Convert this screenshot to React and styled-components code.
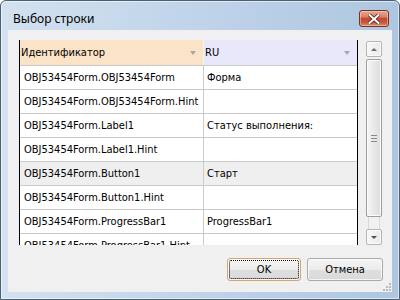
import React from "react";
import styled, { createGlobalStyle } from "styled-components";

const Global = createGlobalStyle`
  html, body { margin: 0; padding: 0; background: #ffffff; }
  #root { width: 400px; height: 300px; }
`;

const Window = styled.div`
  box-sizing: border-box;
  width: 400px;
  height: 300px;
  border: 1px solid #4d5f73;
  border-radius: 6px 6px 0 0;
  background: linear-gradient(to right, #d3e1f0 0%, #c1d5ea 45%, #aec6e0 100%);
  display: flex;
  flex-direction: column;
  overflow: hidden;
  box-shadow: inset 0 0 0 1px rgba(255, 255, 255, 0.55);
`;

const TitleBar = styled.div`
  height: 29px;
  box-sizing: border-box;
  padding: 9px 10px 0 12px;
  display: flex;
  align-items: flex-start;
  justify-content: space-between;
`;

const Title = styled.div`
  font-family: "Noto Sans", "Open Sans", sans-serif;
  font-size: 12px;
  line-height: 17px;
  color: #000;
`;

const CloseButton = styled.div`
  width: 30px;
  height: 17px;
  box-sizing: border-box;
  border: 1px solid #7a2f22;
  border-radius: 3px;
  background: linear-gradient(
    to bottom,
    #e6a895 0%,
    #d98068 40%,
    #c4482f 50%,
    #c7553a 75%,
    #dc8c6e 100%
  );
  display: flex;
  align-items: center;
  justify-content: center;
  box-shadow: inset 0 0 0 1px rgba(255, 220, 200, 0.5);
`;

const Client = styled.div`
  position: relative;
  margin: 0 7px 7px 7px;
  height: 262px;
  box-sizing: border-box;
  background: #f0f0f0;
  padding: 10px 9px 0 11px;
  display: flex;
  flex-direction: column;
`;

const Body = styled.div`
  display: flex;
  gap: 8px;
  height: 205px;
`;

const Grid = styled.div`
  width: 339px;
  height: 205px;
  box-sizing: border-box;
  border-left: 1px solid #000;
  border-right: 1px solid #000;
  background: #ffffff;
  overflow: hidden;
  font-family: "DejaVu Sans Condensed", "DejaVu Sans", sans-serif;
  font-stretch: condensed;
  font-size: 11px;
  color: #000;
`;

const HeaderRow = styled.div`
  display: flex;
  height: 25px;
  border-bottom: 1px solid #c9c9c9;
`;

const HeaderCell = styled.div`
  box-sizing: border-box;
  width: ${(p) => p.$w}px;
  background: ${(p) => p.$bg};
  border-left: ${(p) => (p.$first ? "none" : "1px solid #f6f2f0")};
  padding: 0 7px 0 1px;
  display: flex;
  align-items: center;
  justify-content: space-between;
`;

const SortArrow = styled.span`
  width: 0;
  height: 0;
  border-left: 3px solid transparent;
  border-right: 3px solid transparent;
  border-top: 4px solid #a6a6a6;
  margin-top: 1px;
`;

const Row = styled.div`
  display: flex;
  height: 23px;
  border-bottom: 1px solid #cbcbcb;
  background: ${(p) => (p.$active ? "#efefef" : "#ffffff")};
`;

const Cell = styled.div`
  box-sizing: border-box;
  width: ${(p) => p.$w}px;
  border-left: ${(p) => (p.$first ? "none" : "1px solid #cbcbcb")};
  padding-left: ${(p) => (p.$first ? 4 : 3)}px;
  display: flex;
  align-items: center;
  white-space: nowrap;
  overflow: hidden;
`;

const ScrollBar = styled.div`
  width: 16px;
  height: 205px;
  box-sizing: border-box;
  padding-top: 1px;
  display: flex;
  flex-direction: column;
`;

const ScrollButton = styled.div`
  height: 16px;
  box-sizing: border-box;
  border: 1px solid #b4b4b4;
  border-radius: 2px;
  background: linear-gradient(to right, #f8f8f8, #e9e9e9);
  display: flex;
  align-items: center;
  justify-content: center;
  box-shadow: inset 0 0 0 1px #fbfbfb;
`;

const Arrow = styled.span`
  width: 0;
  height: 0;
  border-left: 3px solid transparent;
  border-right: 3px solid transparent;
  ${(p) =>
    p.$up
      ? "border-bottom: 3px solid #6e6e6e;"
      : "border-top: 3px solid #4e4e4e;"}
`;

const Thumb = styled.div`
  margin-top: 2px;
  height: 158px;
  box-sizing: border-box;
  border: 1px solid #9c9c9c;
  border-radius: 2px;
  background: linear-gradient(to right, #f6f6f6, #e6e6e6 60%, #dcdcdc);
  box-shadow: inset 0 0 0 1px #fcfcfc;
  display: flex;
  align-items: center;
  justify-content: center;
`;

const Grip = styled.div`
  width: 6px;
  height: 7px;
  background: repeating-linear-gradient(
    to bottom,
    #8a8a8a 0px,
    #8a8a8a 1px,
    transparent 1px,
    transparent 3px
  );
`;

const Track = styled.div`
  flex: 1;
  margin: 0 2px;
  border-left: 1px solid #dadada;
  border-right: 1px solid #dadada;
  background: #f1f1f1;
`;

const Footer = styled.div`
  display: flex;
  justify-content: flex-end;
  gap: 6px;
  margin-top: 13px;
`;

const Button = styled.div`
  width: ${(p) => p.$w}px;
  height: 23px;
  box-sizing: border-box;
  border: 1px solid ${(p) => (p.$default ? "#d7a56c" : "#a9a9a9")};
  border-radius: 3px;
  background: linear-gradient(
    to bottom,
    #f4f4f4 0%,
    #ececec 50%,
    #dfdfdf 51%,
    #d9d9d9 100%
  );
  display: flex;
  align-items: center;
  justify-content: center;
  font-family: "DejaVu Sans Condensed", "DejaVu Sans", sans-serif;
  font-stretch: condensed;
  font-size: 11px;
  color: #000;
  position: relative;
  box-shadow: inset 0 0 0 1px rgba(255, 255, 255, 0.7);
`;

const Focus = styled.span`
  position: absolute;
  inset: 1px;
  border: 1px dotted #000;
  border-radius: 2px;
`;

const ResizeGrip = styled.svg`
  position: absolute;
  right: 1px;
  bottom: 1px;
`;

const rows = [
  ["OBJ53454Form.OBJ53454Form", "Форма"],
  ["OBJ53454Form.OBJ53454Form.Hint", ""],
  ["OBJ53454Form.Label1", "Статус выполнения:"],
  ["OBJ53454Form.Label1.Hint", ""],
  ["OBJ53454Form.Button1", "Старт", true],
  ["OBJ53454Form.Button1.Hint", ""],
  ["OBJ53454Form.ProgressBar1", "ProgressBar1"],
  ["OBJ53454Form.ProgressBar1.Hint", ""],
];

export default function App() {
  return (
    <>
      <Global />
      <Window>
        <TitleBar>
          <Title>Выбор строки</Title>
          <CloseButton>
            <svg width="12" height="10" viewBox="0 0 12 10">
              <path
                d="M1.5 1 L10.5 9 M10.5 1 L1.5 9"
                stroke="#5a2418"
                strokeWidth="3.6"
                strokeLinecap="square"
              />
              <path
                d="M1.5 1 L10.5 9 M10.5 1 L1.5 9"
                stroke="#ffffff"
                strokeWidth="2"
                strokeLinecap="square"
              />
            </svg>
          </CloseButton>
        </TitleBar>
        <Client>
          <Body>
            <Grid>
              <HeaderRow>
                <HeaderCell $w={183} $bg="#fbe3c7" $first>
                  Идентификатор
                  <SortArrow />
                </HeaderCell>
                <HeaderCell $w={154} $bg="#e8e8fa">
                  RU
                  <SortArrow />
                </HeaderCell>
              </HeaderRow>
              {rows.map(([id, ru, active], i) => (
                <Row key={i} $active={active}>
                  <Cell $w={183} $first>
                    {id}
                  </Cell>
                  <Cell $w={154}>{ru}</Cell>
                </Row>
              ))}
            </Grid>
            <ScrollBar>
              <ScrollButton>
                <Arrow $up />
              </ScrollButton>
              <Thumb>
                <Grip />
              </Thumb>
              <Track />
              <ScrollButton>
                <Arrow />
              </ScrollButton>
            </ScrollBar>
          </Body>
          <Footer>
            <Button $w={74} $default>
              <Focus />
              OK
            </Button>
            <Button $w={76}>Отмена</Button>
          </Footer>
          <ResizeGrip width="8" height="8" viewBox="0 0 8 8">
            {[
              [6, 0],
              [6, 3],
              [3, 3],
              [6, 6],
              [3, 6],
              [0, 6],
            ].map(([x, y], i) => (
              <rect key={i} x={x} y={y} width="2" height="2" fill="#b8b8b8" />
            ))}
          </ResizeGrip>
        </Client>
      </Window>
    </>
  );
}
